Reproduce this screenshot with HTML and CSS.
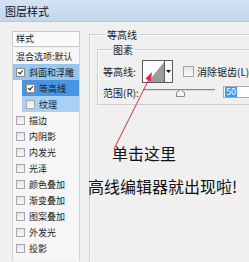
FILE: index.html
```html
<!DOCTYPE html>
<html lang="zh">
<head>
  <meta charset="UTF-8">
  <title>图层样式</title>
  <link rel="stylesheet" href="styles.css">
</head>
<body>

  <div class="window">
    <div class="titlebar">图层样式</div>

    <div class="main">
      <div class="sidebar">
        <div class="side-head">样式</div>
        <ul class="style-list">
          <li class="item plain">混合选项:默认</li>
          <li class="item sel"><span class="cb on"></span>斜面和浮雕</li>
          <li class="item sub sel-dark"><span class="cb on"></span>等高线</li>
          <li class="item sub sel-light"><span class="cb"></span>纹理</li>
          <li class="item"><span class="cb"></span>描边</li>
          <li class="item"><span class="cb"></span>内阴影</li>
          <li class="item"><span class="cb"></span>内发光</li>
          <li class="item"><span class="cb"></span>光泽</li>
          <li class="item"><span class="cb"></span>颜色叠加</li>
          <li class="item"><span class="cb"></span>渐变叠加</li>
          <li class="item"><span class="cb"></span>图案叠加</li>
          <li class="item"><span class="cb"></span>外发光</li>
          <li class="item"><span class="cb"></span>投影</li>
        </ul>
      </div>

      <div class="panel">
        <fieldset class="group">
          <legend>等高线</legend>
          <fieldset class="group inner">
            <legend>图素</legend>

            <div class="row">
              <span class="label">等高线:</span>
              <div class="contour">
                <svg class="swatch" width="21" height="21" viewBox="0 0 21 21">
                  <rect width="21" height="21" fill="#fff"/>
                  <polygon points="5,21 21,1 21,21" fill="#9c9c9c"/>
                </svg>
                <span class="drop">
                  <svg width="5" height="3" viewBox="0 0 5 3"><polygon points="0,0 5,0 2.5,3" fill="#111"/></svg>
                </span>
              </div>
              <span class="check-box"></span>
              <span class="check-label">消除锯齿(L)</span>
            </div>

            <div class="row range">
              <span class="label">范围(R):</span>
              <div class="slider">
                <div class="track"></div>
                <svg class="thumb" width="9" height="8" viewBox="0 0 9 8">
                  <polygon points="4.5,0.5 8.5,3.5 8.5,7.5 0.5,7.5 0.5,3.5" fill="#f4f4f4" stroke="#8a8a8a"/>
                </svg>
              </div>
              <div class="num"><span class="hl">50</span></div>
            </div>
          </fieldset>
        </fieldset>
      </div>
    </div>

    <div class="note note-1">单击这里</div>
    <div class="note note-2">高线编辑器就出现啦!</div>

    <svg class="arrow" width="249" height="262" viewBox="0 0 249 262">
      <line x1="114" y1="149" x2="149" y2="79" stroke="#e0283a" stroke-width="1"/>
      <polygon points="152,72 150.7,81.4 145.3,78.8" fill="#e0283a"/>
    </svg>
  </div>

</body>
</html>
```

FILE: styles.css
```css
body {
  margin: 0;
  padding: 0;
  background-color: #f0f0f0;
  font-family: "Noto Sans CJK SC", "Noto Sans", sans-serif;
  color: #1a1a1a;
}
.window {
  position: relative;
  width: 249px;
  height: 262px;
  overflow: hidden;
  background-color: #f0f0f0;
}
.titlebar {
  height: 21px;
  line-height: 22px;
  padding-left: 5px;
  font-size: 11px;
  color: #111;
  border-top: 1px solid #7d93ad;
  border-bottom: 1px solid #b4c6da;
  background: linear-gradient(#d4e3f4, #c3d6ec);
  box-sizing: content-box;
  margin-top: -1px;
}
.main {
  display: flex;
  height: 239px;
}
.sidebar {
  display: flex;
  flex-direction: column;
  width: 68px;
  margin-left: 12px;
  padding-top: 9px;
}
.side-head {
  height: 14px;
  line-height: 14px;
  padding-left: 3px;
  font-size: 9px;
  border: 1px solid #c9c9c9;
  background-color: #fafafa;
}
.style-list {
  flex: 1;
  list-style: none;
  margin: 1px 0 0 0;
  padding: 0;
  border-left: 1px solid #d2d2d2;
  border-right: 1px solid #d2d2d2;
  background-color: #f6f6f6;
}
.item {
  display: flex;
  align-items: center;
  height: 16px;
  padding-left: 3px;
  font-size: 9px;
  white-space: nowrap;
}
.item.plain {
  padding-left: 3px;
}
.item.sub {
  margin-left: 9px;
  padding-left: 4px;
}
.sel {
  background-color: #98c6f0;
}
.sel-dark {
  background-color: #4a94e4;
}
.sel-light {
  background-color: #a9d0f5;
}
.cb {
  position: relative;
  width: 7px;
  height: 7px;
  margin-right: 4px;
  border: 1px solid #a8a8a8;
  background: linear-gradient(#e6e6e6, #fafafa);
  flex-shrink: 0;
}
.cb.on {
  background: #fff;
  border-color: #8d8d8d;
}
.cb.on::after {
  content: "";
  position: absolute;
  left: 2px;
  top: 0;
  width: 2px;
  height: 4px;
  border-right: 1px solid #222;
  border-bottom: 1px solid #222;
  transform: rotate(40deg);
}
.panel {
  flex: 1;
  margin-left: 9px;
  overflow: hidden;
}
.group {
  margin: 6px -20px 0 0;
  padding: 2px 20px 0 7px;
  border: 1px solid #d0d0d0;
  box-shadow: inset 1px 1px 0 #fbfbfb;
  min-width: 0;
  height: 260px;
}
.group legend {
  margin-left: 8px;
  padding: 0 2px;
  font-size: 10px;
  line-height: 13px;
}
.group.inner {
  margin: 0 -20px 0 0;
  padding: 4px 0 6px 5px;
  height: auto;
}
.row {
  display: flex;
  align-items: center;
  height: 23px;
}
.row.range {
  height: 12px;
  margin-top: 3px;
}
.label {
  width: 39px;
  font-size: 10px;
  white-space: nowrap;
}
.range .label {
  width: 40px;
}
.contour {
  display: flex;
  height: 21px;
  border: 1px solid #5a5a5a;
  background-color: #fff;
}
.swatch {
  display: block;
  border-right: 1px solid #5a5a5a;
}
.drop {
  display: flex;
  align-items: center;
  justify-content: center;
  width: 7px;
  background-color: #f7f7f7;
}
.check-box {
  width: 9px;
  height: 9px;
  margin-left: 10px;
  border: 1px solid #a5a5a5;
  background: linear-gradient(#e4e4e4, #fbfbfb);
}
.check-label {
  margin-left: 3px;
  font-size: 10px;
  white-space: nowrap;
}
.slider {
  position: relative;
  width: 72px;
  height: 12px;
}
.track {
  margin-top: 3px;
  height: 1px;
  border-top: 1px solid #8c8c8c;
  background-color: #d6d6d6;
}
.thumb {
  position: absolute;
  left: 33px;
  top: 3px;
}
.num {
  width: 40px;
  height: 10px;
  margin-left: 8px;
  padding-left: 1px;
  border: 1px solid #a9abb3;
  background-color: #fff;
  font-size: 9px;
  line-height: 10px;
}
.hl {
  display: inline-block;
  padding: 0 1px;
  background-color: #3399ff;
  color: #fff;
}
.note {
  position: absolute;
  font-size: 16px;
  line-height: 20px;
  color: #111;
  white-space: nowrap;
}
.note-1 {
  left: 112px;
  top: 143px;
}
.note-2 {
  left: 88px;
  top: 176px;
}
.arrow {
  position: absolute;
  left: 0;
  top: 0;
  pointer-events: none;
}
```
